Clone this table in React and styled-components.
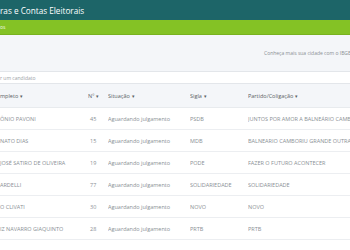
import styled, { createGlobalStyle } from 'styled-components';

const GlobalStyle = createGlobalStyle`
  html, body {
    margin: 0;
    padding: 0;
    background: #f4f6f9;
    font-family: "Open Sans", "Liberation Sans", sans-serif;
    overflow: hidden;
  }
`;

const Page = styled.div`
  width: 350px;
  height: 250px;
  overflow: hidden;
  display: flex;
  flex-direction: column;
`;

const TopBar = styled.header`
  height: 20px;
  background: #1d6568;
  color: #fff;
  font-size: 8.2px;
  display: flex;
  align-items: center;
  white-space: nowrap;
`;

const SubBar = styled.nav`
  height: 15px;
  background: #84c225;
  border-bottom: 1px solid #78b21f;
  box-sizing: border-box;
  color: #f2f8e6;
  font-size: 5px;
  display: flex;
  align-items: center;
`;

const Intro = styled.div`
  height: 37px;
  display: flex;
  align-items: center;
  padding-left: 264px;
  box-sizing: border-box;
  font-size: 5px;
  color: #8a8f94;
  white-space: nowrap;
  overflow: hidden;
  border-bottom: 1px solid #e3e6ea;
`;

const Search = styled.input`
  display: block;
  height: 12px;
  width: 100%;
  box-sizing: border-box;
  border: none;
  border-bottom: 1px solid #e3e6ea;
  background: #fff;
  padding: 0;
  font-family: inherit;
  font-size: 5px;
  outline: none;
  &::placeholder { color: #9ba1a6; }
`;

const Table = styled.div`
  display: grid;
  grid-template-columns: 88px 20px 82px 58px 1fr;
  white-space: nowrap;
`;

const HeadCell = styled.div`
  height: 24px;
  display: flex;
  align-items: center;
  font-size: 5.5px;
  font-weight: 500;
  color: #5a5f64;
  background: #f4f6f9;
  border-bottom: 1px solid #e8ebee;
  box-sizing: border-box;
  overflow: hidden;
  &::after {
    content: "▾";
    margin-left: 2px;
    font-size: 4.5px;
  }
`;

const Cell = styled.div`
  height: 22px;
  display: flex;
  align-items: center;
  font-size: 5.5px;
  color: #8a9095;
  background: #fff;
  border-bottom: 1px solid #eceef1;
  box-sizing: border-box;
  overflow: hidden;
  padding-left: ${p => p.$pad || 0}px;
`;

const Filler = styled.div`
  flex: 1;
  background: #fff;
`;

const rows = [
  ['ÔNIO PAVONI', '45', 'PSDB', 'JUNTOS POR AMOR A BALNEÁRIO CAMBORIÚ'],
  ['NATO DIAS', '15', 'MDB', 'BALNEARIO CAMBORIU GRANDE OUTRA VEZ'],
  ['JOSÉ SATIRO DE OLIVEIRA', '19', 'PODE', 'FAZER O FUTURO ACONTECER'],
  ['ARDELLI', '77', 'SOLIDARIEDADE', 'SOLIDARIEDADE'],
  ['O CLIVATI', '30', 'NOVO', 'NOVO'],
  ['IZ NAVARRO GIAQUINTO', '28', 'PRTB', 'PRTB'],
];

export default function App() {
  return (
    <Page>
      <GlobalStyle />
      <TopBar>ras e Contas Eleitorais</TopBar>
      <SubBar>os</SubBar>
      <Intro>Conheça mais sua cidade com o IBGE</Intro>
      <Search placeholder="r um candidato" />
      <Table>
        <HeadCell>mpleto</HeadCell>
        <HeadCell>Nº</HeadCell>
        <HeadCell>Situação</HeadCell>
        <HeadCell>Sigla</HeadCell>
        <HeadCell>Partido/Coligação</HeadCell>
        {rows.map(r => [
          <Cell key={r[0]}>{r[0]}</Cell>,
          <Cell key={r[0] + 'n'} $pad={2}>{r[1]}</Cell>,
          <Cell key={r[0] + 's'}>Aguardando julgamento</Cell>,
          <Cell key={r[0] + 'g'}>{r[2]}</Cell>,
          <Cell key={r[0] + 'p'}>{r[3]}</Cell>,
        ])}
      </Table>
      <Filler />
    </Page>
  );
}
